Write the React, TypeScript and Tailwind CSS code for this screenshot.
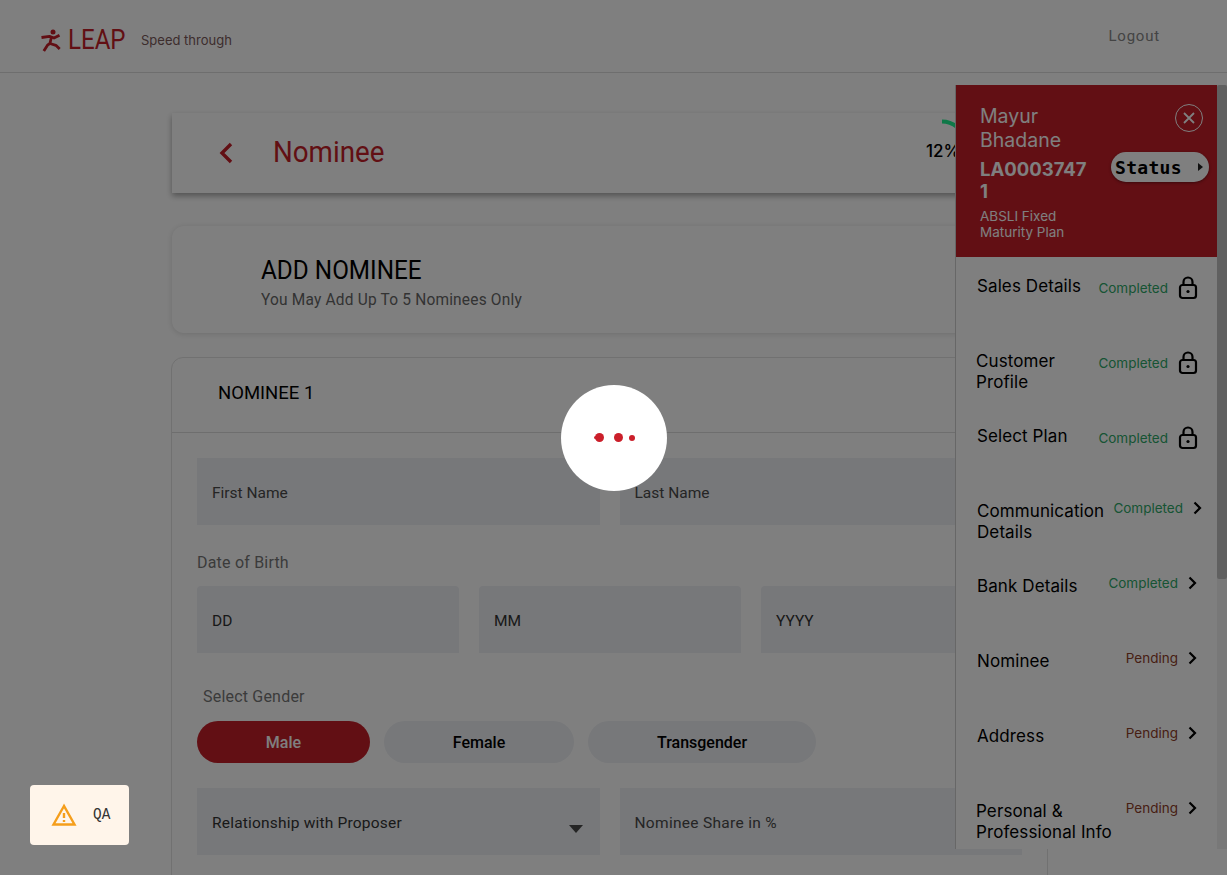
import React from "react";

const din = "[font-family:Roboto,'Liberation_Sans',sans-serif]";
const pub = "[font-family:Inter,'Liberation_Sans',sans-serif]";

function Field({ label, className, strong, caret }: { label: string; className: string; strong?: boolean; caret?: boolean }) {
  return (
    <div className={`relative flex h-[67px] items-center bg-[#eef0f4] pl-[15px] pt-[5px] text-[15.5px] ${strong ? "text-[#333]" : "text-[#4a4a4a]"} ${className}`}>
      {label}
      {caret && (
        <svg className="absolute right-[17px] top-[37px]" width="14" height="8" viewBox="0 0 14 8">
          <path d="M0 0h14L7 8z" fill="#4a4a4a" />
        </svg>
      )}
    </div>
  );
}

function Lock() {
  return (
    <svg width="20" height="24" viewBox="0 0 20 24" fill="none" stroke="#000" strokeWidth="2.2">
      <rect x="2" y="9" width="16" height="13" rx="2.5" />
      <path d="M5.5 9V6a4.5 4.5 0 0 1 9 0v3" />
      <circle cx="10" cy="15.5" r="1.6" fill="#000" stroke="none" />
    </svg>
  );
}

function Chevron() {
  return (
    <svg width="9" height="14" viewBox="0 0 9 14" fill="none" stroke="#000" strokeWidth="2.2">
      <path d="M1.5 1.5 7 7l-5.5 5.5" />
    </svg>
  );
}

const rows = [
  { label: "Sales Details", status: "Completed", lock: true, cls: "pl-[21px] pr-[19px]" },
  { label: "Customer Profile", status: "Completed", lock: true, cls: "pl-[20px] pr-[19px]" },
  { label: "Select Plan", status: "Completed", lock: true, cls: "pl-[21px] pr-[19px]" },
  { label: "Communication Details", status: "Completed", lock: false, cls: "pl-[21px] pr-[15px]" },
  { label: "Bank Details", status: "Completed", lock: false, cls: "pl-[21px] pr-[20px]" },
  { label: "Nominee", status: "Pending", lock: false, cls: "pl-[21px] pr-[20px]" },
  { label: "Address", status: "Pending", lock: false, cls: "pl-[21px] pr-[20px]" },
  { label: "Personal & Professional Info", status: "Pending", lock: false, cls: "pl-[20px] pr-[20px]" },
];

export default function App() {
  return (
    <div className={`relative h-[875px] w-[1227px] overflow-hidden bg-white ${din}`}>
      <header className="flex h-[73px] items-center border-b border-[#dcdcdc] pl-[40px] pr-[67px]">
        <div className="mt-[8px] flex items-center">
          <svg width="22" height="24" viewBox="0 0 22 24" fill="none" stroke="#c41e28" strokeWidth="2.8" strokeLinejoin="round">
            <circle cx="13" cy="4" r="2.5" fill="#c41e28" stroke="none" />
            <path d="M1.5 9.5l8-1.2 4.5 1.7 5.5-2.8" />
            <path d="M11.5 9l-1.6 6.5-2.4 1.7L3.8 23" />
            <path d="M9.9 15.5l6 1.8 3.8 3.7" />
          </svg>
          <span className="ml-[6px] w-[60px] origin-left scale-x-[0.86] text-[28px] leading-none text-[#c41e28]">LEAP</span>
          <span className={`ml-[13px] mt-[2px] text-[13px] text-[#7a5a5a] ${pub}`}>Speed through</span>
        </div>
        <span className="ml-auto text-[15px] tracking-[0.8px] text-[#888]">Logout</span>
      </header>

      <main className="ml-[172px] flex w-[875px] flex-col pt-[40px]">
        <section className="flex h-[80px] items-center bg-white pl-[46px] shadow-[0_3px_6px_rgba(0,0,0,0.35)]">
          <svg width="16" height="24" viewBox="0 0 16 24" fill="none" stroke="#c41e28" strokeWidth="3.4">
            <path d="M13 3 4 12l9 9" />
          </svg>
          <h1 className="ml-[39px] mb-[4px] w-[120px] origin-left scale-x-[0.925] text-[30px] font-normal text-[#c41e28]">Nominee</h1>
          <div className="relative ml-auto mr-[91px] h-full w-[30px]">
            <svg className="absolute left-[16px] top-[6px]" width="20" height="14" viewBox="0 0 20 14" fill="none" stroke="#1ef090" strokeWidth="4">
              <path d="M0 2.5c5 0 10 1.5 15 5.5" />
            </svg>
            <span className={`absolute left-0 top-[26px] text-[17px] font-medium text-black ${pub}`}>12%</span>
          </div>
        </section>

        <section className="mt-[33px] h-[107px] rounded-[12px] bg-white pl-[89px] pt-[29px] shadow-[0_1px_6px_rgba(0,0,0,0.14)]">
          <h2 className="origin-left scale-x-[0.935] text-[26px] font-normal leading-[30px] text-black">ADD NOMINEE</h2>
          <p className="mt-[5px] origin-left scale-x-[0.967] text-[16px] leading-[20px] tracking-[0.2px] text-[#666]">You May Add Up To 5 Nominees Only</p>
        </section>

        <section className="-mx-px mt-[24px] rounded-t-[12px] border border-[#e2e2e2] bg-white pb-[40px]">
          <div className="flex h-[75px] items-center border-b border-[#dcdcdc] pb-[3px] pl-[46px] text-[18.5px] text-black">NOMINEE 1</div>
          <div className="px-[25px] pt-[25px]">
            <div className="flex gap-[20px]">
              <Field label="First Name" className="flex-1" />
              <Field label="Last Name" className="flex-1" />
            </div>
            <p className="mt-[28px] text-[16px] leading-[20px] tracking-[0.2px] text-[#777]">Date of Birth</p>
            <div className="mt-[13px] flex gap-[20px]">
              <Field label="DD" className="w-[262px] rounded-t-[4px]" strong />
              <Field label="MM" className="w-[262px] rounded-t-[4px]" strong />
              <Field label="YYYY" className="flex-1 rounded-t-[4px]" strong />
            </div>
            <p className="ml-[6px] mt-[33px] pt-px text-[16px] leading-[20px] tracking-[0.2px] text-[#777]">Select Gender</p>
            <div className="mt-[14px] flex gap-[14px] text-[16px] font-medium text-black">
              <button className="h-[42px] w-[173px] rounded-full bg-[#c41e28] pt-[2px] text-white">Male</button>
              <button className="h-[42px] w-[190px] rounded-full bg-[#eef0f4] pt-[2px]">Female</button>
              <button className="h-[42px] w-[228px] rounded-full bg-[#eef0f4] pt-[2px]">Transgender</button>
            </div>
            <div className="mt-[25px] flex gap-[20px]">
              <Field label="Relationship with Proposer" className="flex-1 tracking-[0.2px]" strong caret />
              <Field label="Nominee Share in %" className="flex-1 tracking-[0.3px]" />
            </div>
          </div>
        </section>
      </main>

      <aside className={`absolute left-[955px] top-[85px] flex h-[764px] w-[272px] overflow-hidden bg-white ${pub}`}>
        <div className="w-[262px] shrink-0 border-l border-[#cfcfcf]">
          <div className="relative h-[172px] bg-[#c41e28] pl-[24px] pt-[19px] text-white">
            <div className="w-[100px] text-[19.5px] leading-[24px]">Mayur Bhadane</div>
            <div className="mt-[6px] w-[112px] break-all text-[18.5px] font-bold leading-[22px]">LA00037471</div>
            <div className="mt-[6px] w-[110px] text-[13.5px] leading-[16px]">ABSLI Fixed Maturity Plan</div>
            <div className="absolute left-[219px] top-[19px] flex h-[28px] w-[28px] items-center justify-center rounded-full border border-white">
              <svg width="12" height="12" viewBox="0 0 12 12" stroke="#fff" strokeWidth="1.8"><path d="M1 1l10 10M11 1 1 11" /></svg>
            </div>
            <div className="absolute left-[155px] top-[67px] flex h-[30px] w-[98px] items-center justify-between rounded-full bg-white pl-[4px] pr-[6px] text-black shadow-[0_1px_3px_rgba(0,0,0,0.4)]">
              <span className="mt-px text-[18px] font-bold tracking-[0.3px] [font-family:'DejaVu_Sans_Mono',monospace]">Status</span>
              <svg width="5" height="8" viewBox="0 0 5 8" fill="#222"><path d="M0 0l5 4-5 4z" /></svg>
            </div>
          </div>
          {rows.map((r) => (
            <div key={r.label} className={`flex h-[75px] items-start ${r.cls}`}>
              <div className="min-w-0 flex-1 pt-[19px] text-[17px] leading-[21px] tracking-[0.1px] text-black">{r.label}</div>
              <div className={`flex shrink-0 items-center gap-[10px] ${r.lock ? "pt-[19px]" : "pt-[16px]"}`}>
                <span className={`text-[13.5px] leading-[20px] ${r.status === "Completed" ? "text-[#2ea868]" : "text-[#8f4028]"}`}>{r.status}</span>
                {r.lock ? <Lock /> : <Chevron />}
              </div>
            </div>
          ))}
        </div>
        <div className="flex w-[10px] shrink-0 flex-col bg-[#f1f1f1]">
          <div className="h-[494px] rounded-[2px] bg-[#c1c1c1]" />
        </div>
      </aside>

      <div className="absolute inset-0 bg-black/50" />

      <div className="absolute left-[561px] top-[385px] flex h-[106px] w-[106px] items-center justify-center rounded-full bg-white pb-px pl-[2px]">
        <span className="relative h-[9px] w-[9px] rounded-full bg-[#cb1f2a]">
          <span className="absolute -left-[1px] top-[3px] h-[3px] w-[3px] rounded-full bg-[#cb1f2a]" />
        </span>
        <span className="ml-[10px] h-[9px] w-[9px] rounded-full bg-[#cb1f2a]" />
        <span className="ml-[6px] h-[6px] w-[6px] rounded-full bg-[#cb1f2a]" />
      </div>

      <div className="absolute left-[30px] top-[785px] flex h-[60px] w-[99px] items-center gap-[16px] rounded-[4px] bg-[#fff5ea] pl-[21px]">
        <svg width="26" height="24" viewBox="0 0 26 24" fill="none" stroke="#f59e1b" strokeWidth="2.4">
          <path d="M13 3 2.5 21.5h21z" />
          <path d="M13 10v5M13 17v2" />
        </svg>
        <span className="origin-left scale-x-90 text-[16px] text-[#333] [font-family:'Liberation_Mono',monospace]">QA</span>
      </div>
    </div>
  );
}
